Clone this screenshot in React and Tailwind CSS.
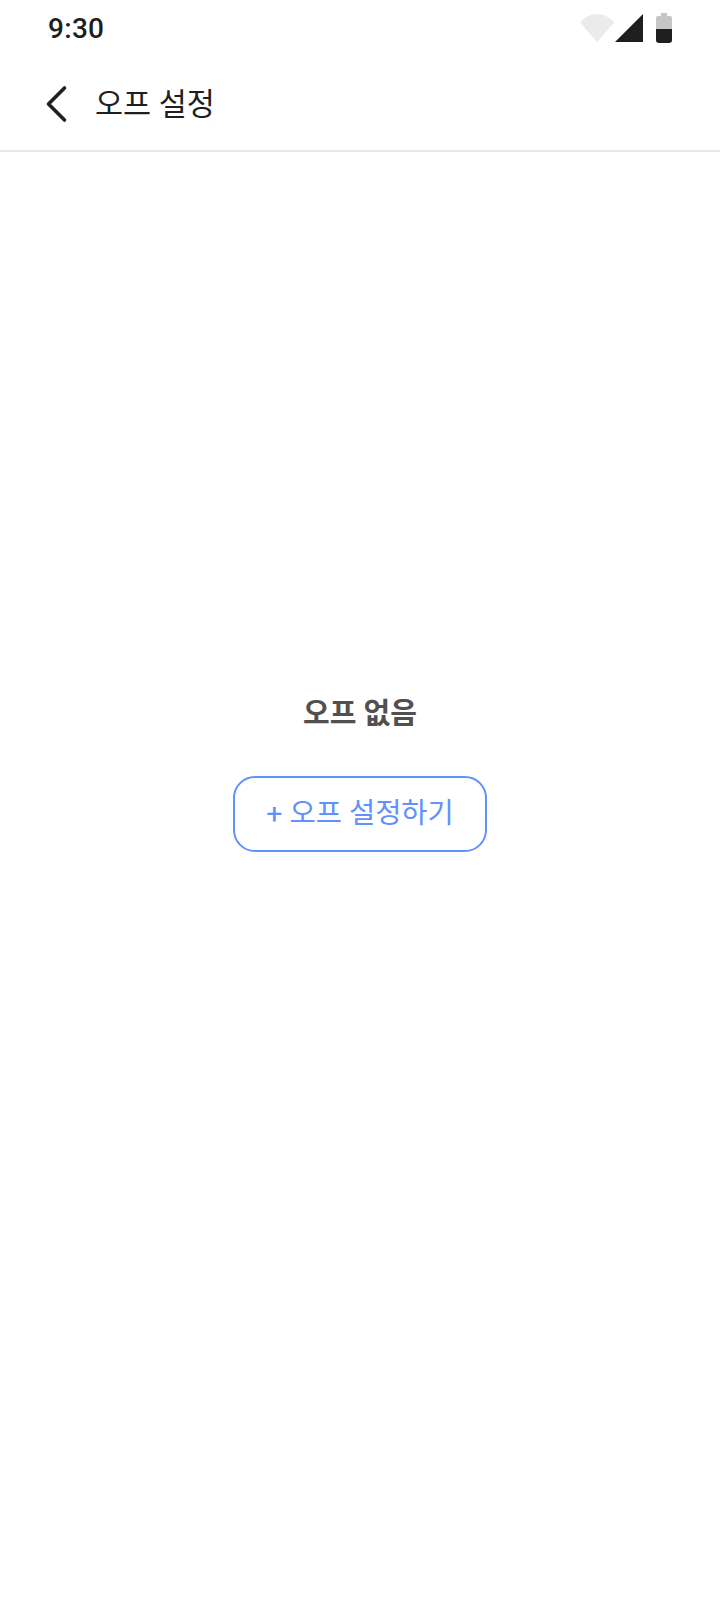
const StatusIcons = () => (
    <div className="flex items-center">
        <svg width="34" height="30" viewBox="0 0 34 30">
            <path d="M0 9.5 C4.5 4 10.5 1 17 1 C23.5 1 29.5 4 34 9.5 L17 29 Z" fill="#ebebeb" />
        </svg>
        <svg width="29" height="30" viewBox="0 0 29 30" className="ml-[1px]">
            <path d="M28 1 V29 H0 Z" fill="#1f1f1f" />
        </svg>
        <svg width="16" height="30" viewBox="0 0 16 30" className="ml-[12px]">
            <path d="M5 0 H11 V3 H14 Q16 3 16 5 V16 H0 V5 Q0 3 2 3 H5 Z" fill="#c6c6c6" />
            <path d="M0 16 H16 V27 Q16 30 13 30 H3 Q0 30 0 27 Z" fill="#1f1f1f" />
        </svg>
    </div>
);

export default function App() {
    return (
        <div className="w-[720px] h-[1600px] bg-white flex flex-col font-[family-name:Roboto,Noto_Sans_CJK_KR,sans-serif]">
            {/* Status bar */}
            <div className="h-[56px] pl-[48px] pr-[48px] flex items-center justify-between">
                <span className="text-[28px] leading-none font-medium tracking-[0.3px] text-[#1f1f1f] pt-[1px]">9:30</span>
                <StatusIcons />
            </div>

            {/* Header */}
            <div className="h-[96px] pl-[44px] flex items-center gap-[27px] border-b-2 border-[#e8e8e8]">
                <svg width="24" height="40" viewBox="0 0 24 40" fill="none">
                    <path d="M20.5 5 L4.5 21 L20.5 37" stroke="#1f1f1f" strokeWidth="3.6" strokeLinecap="round" strokeLinejoin="round" />
                </svg>
                <h1 className="text-[30.5px] leading-none font-normal text-[#1f1f1f] pt-[4px]">오프 설정</h1>
            </div>

            {/* Empty state */}
            <div className="pt-[543px] flex flex-col items-center">
                <p className="text-[29px] leading-[38px] font-bold text-[#505050]">오프 없음</p>
                <button className="mt-[43px] w-[254px] h-[76px] rounded-[22px] border-2 border-[#6190ff] bg-white text-[28.5px] leading-none text-[#6190ff]">
                    + 오프 설정하기
                </button>
            </div>
        </div>
    );
}
